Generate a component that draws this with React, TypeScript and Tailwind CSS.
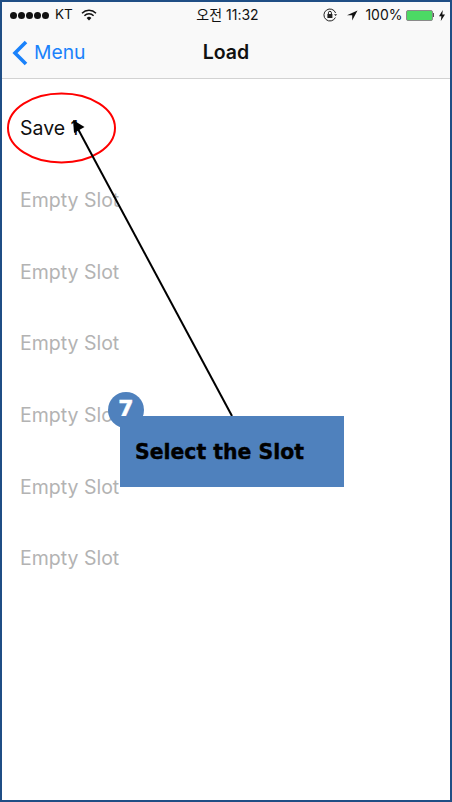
const sans = "font-['Inter','Noto_Sans_CJK_KR',sans-serif]";

function StatusBar() {
  return (
    <div className="flex h-[26px] items-center justify-between pl-[8px] pr-[5px] text-[13.5px] leading-none text-[#111]">
      <div className="flex w-[150px] items-center">
        <div className="flex gap-[1px]">
          {[0, 1, 2, 3, 4].map((i) => (
            <span key={i} className="h-[7px] w-[7px] rounded-full bg-[#111]" />
          ))}
        </div>
        <span className="ml-[6px]">KT</span>
        <svg className="ml-[8px]" width="16" height="12" viewBox="0 0 16 12">
          <path d="M1 4.2a10 10 0 0 1 14 0" fill="none" stroke="#111" strokeWidth="1.5" />
          <path d="M3.4 6.7a6.6 6.6 0 0 1 9.2 0" fill="none" stroke="#111" strokeWidth="1.5" />
          <path d="M8 11.5 5.6 8.9a3.4 3.4 0 0 1 4.8 0z" fill="#111" />
        </svg>
      </div>
      <span className="whitespace-nowrap text-[14px]">오전 11:32</span>
      <div className="flex w-[150px] items-center justify-end">
        <svg width="15" height="14" viewBox="0 0 15 14">
          <path d="M12.4 9.5A6 6 0 1 1 12.6 5" fill="none" stroke="#222" strokeWidth="1" />
          <path d="M11 6.2h3.2l-1.6 1.8z" fill="#222" />
          <rect x="4.4" y="6" width="5" height="4" fill="#222" />
          <path d="M5.4 6V4.8a1.5 1.5 0 0 1 3 0V6" fill="none" stroke="#222" strokeWidth="1" />
        </svg>
        <svg className="ml-[9px]" width="11" height="11" viewBox="0 0 11 11">
          <path d="M10.5.5 0 5.2h5.2V10.5z" fill="#111" />
        </svg>
        <span className="ml-[7px] text-[14px]">100%</span>
        <div className="ml-[3px] flex items-center">
          <div className="h-[11px] w-[27px] rounded-[2px] border border-[#8a8a8a] bg-[#4cd964]" />
          <div className="h-[4px] w-[1.5px] bg-[#555]" />
        </div>
        <svg className="ml-[5px]" width="6" height="11" viewBox="0 0 6 11">
          <path d="M3.8 0 0 6.2h2.4L1.8 11 6 4.4H3.3z" fill="#111" />
        </svg>
      </div>
    </div>
  );
}

function NavBar() {
  return (
    <div className="grid h-[50px] grid-cols-[1fr_auto_1fr] items-center pb-[1px]">
      <div className="flex items-center pl-[9px] text-[#1a82fb]">
        <svg width="17" height="26" viewBox="0 0 17 26">
          <path d="M15 2 4 13l11 11" fill="none" stroke="#1a82fb" strokeWidth="3.6" />
        </svg>
        <span className="ml-[6px] text-[19.3px] leading-none">Menu</span>
      </div>
      <div className="text-[19.5px] font-semibold leading-none text-[#111]">Load</div>
      <div />
    </div>
  );
}

export default function App() {
  const slots = ["Empty Slot", "Empty Slot", "Empty Slot", "Empty Slot", "Empty Slot", "Empty Slot"];
  return (
    <div className={`relative h-[802px] w-[452px] overflow-hidden border-2 border-[#1f4e85] bg-white ${sans}`}>
      <div className="border-b border-[#d2d2d2] bg-[#f9f9f9]">
        <StatusBar />
        <NavBar />
      </div>

      <div className="pl-[18px] pt-[14px] text-[19.5px]">
        <div className="flex h-[71.7px] items-center text-[#111]">Save 1</div>
        {slots.map((s, i) => (
          <div key={i} className="flex h-[71.7px] items-center text-[#b3b3b3]">
            {s}
          </div>
        ))}
      </div>

      {/* annotation drawn over the screen */}
      <svg className="absolute left-[-2px] top-[-2px]" width="452" height="802" viewBox="0 0 452 802">
        <ellipse cx="61.5" cy="128" rx="53.5" ry="34.5" fill="none" stroke="#ff0000" strokeWidth="2" />
        <line x1="232" y1="416" x2="78" y2="129" stroke="#000" strokeWidth="2" />
        <path d="M73 120 84.5 127 74 133z" fill="#000" />
      </svg>

      <div className="absolute left-[106px] top-[390px] flex h-[36px] w-[36px] items-center justify-center rounded-full bg-[#4f81bd] pb-[2px] font-['DejaVu_Sans',sans-serif] text-[22px] font-bold leading-none text-white [-webkit-text-stroke:0.5px_white]">
        7
      </div>
      <div className="absolute left-[118px] top-[414px] flex h-[71px] w-[224px] items-center bg-[#4f81bd] pl-[15px] pt-[2px] font-['DejaVu_Sans',sans-serif] text-[20.4px] font-bold leading-none text-black [-webkit-text-stroke:0.4px_black]">
        Select the Slot
      </div>
    </div>
  );
}
